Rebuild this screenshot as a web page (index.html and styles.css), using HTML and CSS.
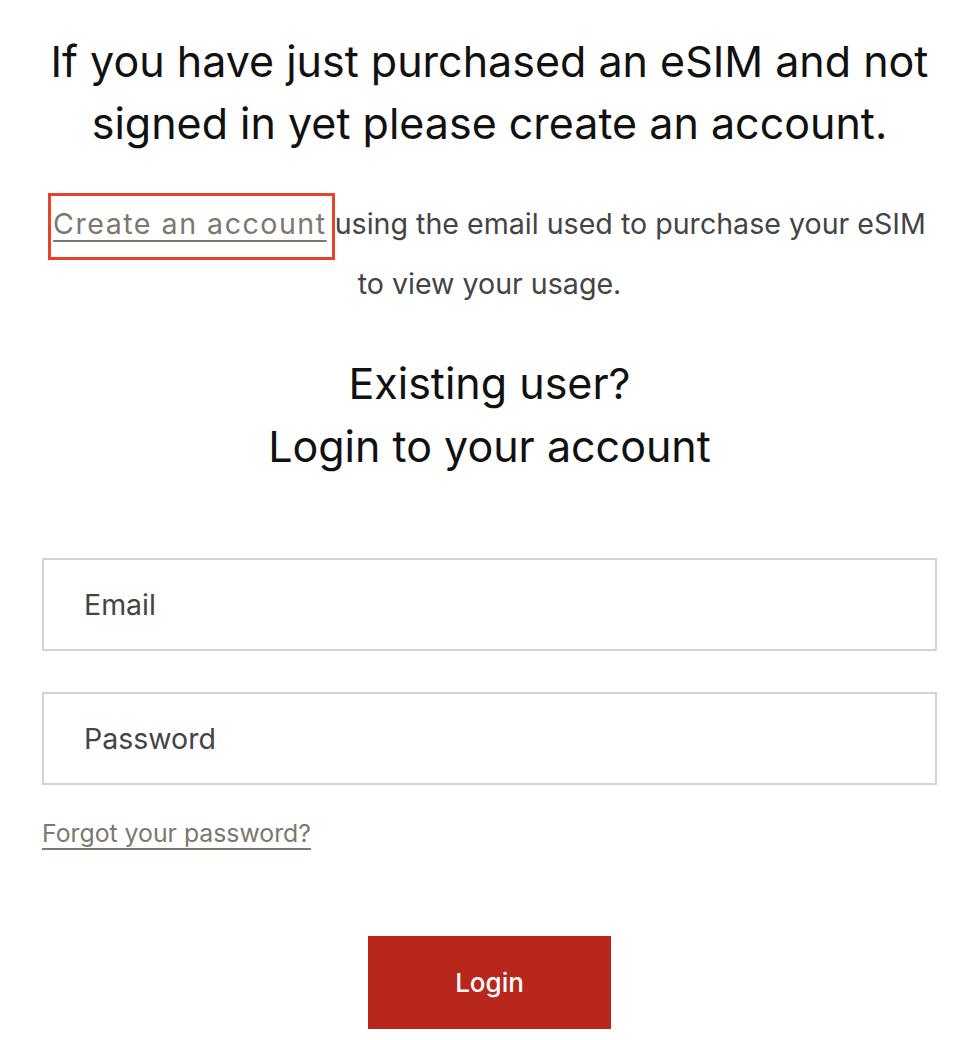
FILE: index.html
```html
<!DOCTYPE html>
<html>
<head>
<meta charset="utf-8">
<link rel="stylesheet" href="styles.css">
</head>
<body>
<main class="page">
  <h1 class="intro-title">If you have just purchased an eSIM and not signed in yet please create an account.</h1>
  <p class="intro-text"><span class="highlight"><a class="link create" href="#">Create an account</a></span> using the email used to purchase your eSIM to view your usage.</p>
  <h2 class="login-title">Existing user?<br>Login to your account</h2>
  <form class="form">
    <input class="field" type="email" placeholder="Email">
    <input class="field" type="password" placeholder="Password">
    <a class="link forgot" href="#">Forgot your password?</a>
    <div class="actions"><button class="btn" type="button">Login</button></div>
  </form>
</main>
</body>
</html>
```
FILE: styles.css
```css
html, body { margin: 0; padding: 0; background: #fff; }
body { font-family: Inter, "Noto Sans", sans-serif; color: #111; }
.page { padding: 0 41px 0 42px; }
.intro-title {
  margin: 30px 0 0;
  font-size: 43px;
  line-height: 62px;
  font-weight: 400;
  text-align: center;
  color: #111;
}
.intro-text {
  margin: 40px 0 0;
  font-size: 28.6px;
  line-height: 60px;
  color: #444;
  text-align: center;
}
.highlight { position: relative; }
.highlight::after {
  content: "";
  position: absolute;
  left: -5px; right: -8px; top: -13px; bottom: -19px;
  border: 3px solid #e8432a;
}
.link { color: #7d7770; text-decoration: underline; text-underline-offset: 6px; text-decoration-thickness: 2px; }
.create { letter-spacing: 1.5px; }
.login-title {
  margin: 38px 0 0;
  font-size: 43px;
  line-height: 63px;
  font-weight: 400;
  text-align: center;
  color: #111;
}
.form { display: flex; flex-direction: column; margin-top: 80px; }
.field {
  height: 93px;
  box-sizing: border-box;
  border: 2px solid #d3d3d3;
  padding: 0 40px;
  font: 28.5px Inter, "Noto Sans", sans-serif;
  color: #444;
  margin-bottom: 41px;
  outline: none;
}
.field::placeholder { color: #444; }
.forgot { align-self: flex-start; font-size: 24.8px; margin-top: -8px; }
.actions { display: flex; justify-content: center; margin-top: 88px; }
.btn {
  width: 243px; height: 93px;
  background: #b9261c; color: #fff;
  border: none;
  font: 500 26px Inter, "Noto Sans", sans-serif;
}
```
